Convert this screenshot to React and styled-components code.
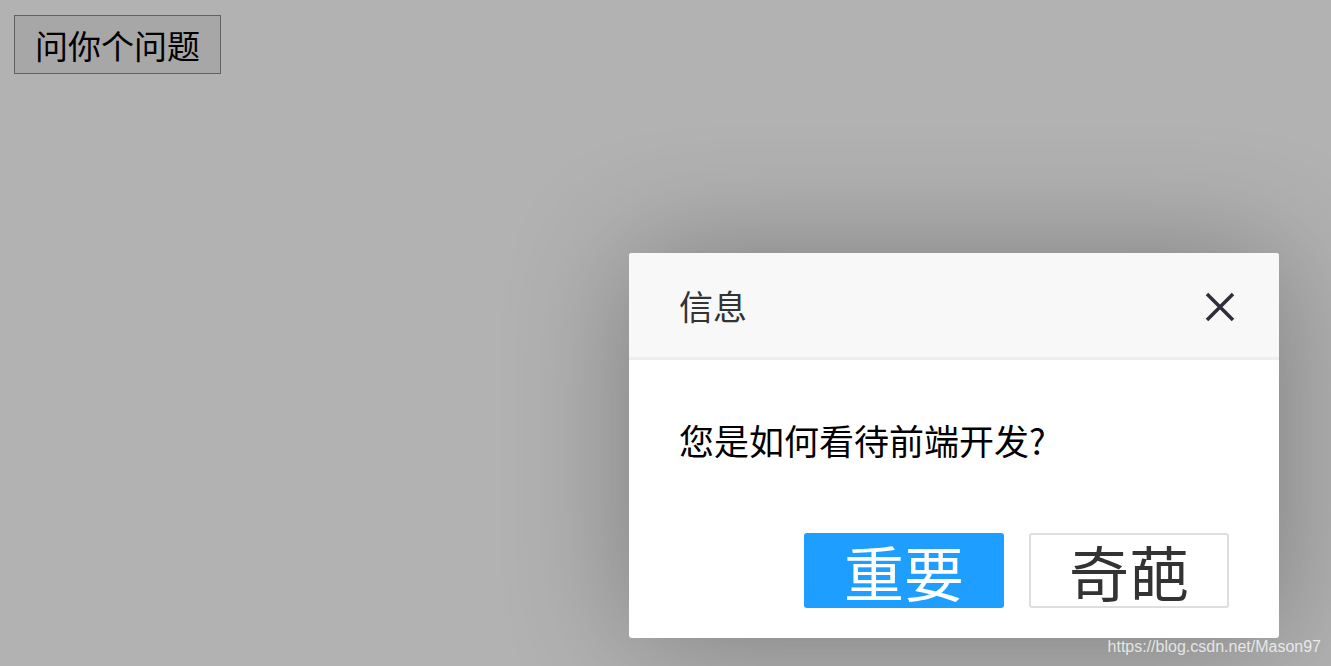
import React from 'react';
import styled, { createGlobalStyle } from 'styled-components';

const cjk = '"Microsoft YaHei", "Noto Sans CJK SC", "Liberation Sans", sans-serif';

const GlobalStyle = createGlobalStyle`
  html, body {
    margin: 0;
    padding: 0;
    background: #fff;
    font-family: ${cjk};
  }
`;

const Page = styled.div`
  position: relative;
  width: 1331px;
  height: 666px;
  overflow: hidden;
  padding: 15px 14px;
  box-sizing: border-box;
`;

const AskButton = styled.button`
  display: block;
  width: 207px;
  height: 59px;
  padding: 0;
  font-family: ${cjk};
  font-size: 33px;
  color: #000;
  background: #efefef;
  border: 1px solid #8c8c8c;
  border-radius: 0;
`;

// layer shade over the whole page
const Shade = styled.div`
  position: absolute;
  inset: 0;
  background: rgba(0, 0, 0, 0.3);
`;

const Dialog = styled.div`
  position: absolute;
  left: 629px;
  top: 253px;
  width: 650px;
  display: flex;
  flex-direction: column;
  background: #fff;
  border-radius: 3px;
  box-shadow: 2px 2px 125px rgba(0, 0, 0, 0.3);
  overflow: hidden;
`;

const Header = styled.div`
  display: flex;
  align-items: center;
  justify-content: space-between;
  height: 104px;
  padding: 0 43px 0 50px;
  background: #f8f8f8;
  border-bottom: 3px solid #eee;
  font-size: 34px;
  color: #333;
`;

const CloseButton = styled.span`
  display: flex;
  width: 32px;
  height: 32px;
  margin-top: 3px;
  align-items: center;
  justify-content: center;
  cursor: pointer;
`;

const Content = styled.div`
  padding: 50px;
  font-size: 35px;
  line-height: 60px;
  color: #000;
`;

const Actions = styled.div`
  display: flex;
  justify-content: flex-end;
  gap: 25px;
  padding: 13px 50px 30px;
`;

const ActionButton = styled.button`
  width: 200px;
  height: 75px;
  padding: 0;
  box-sizing: border-box;
  font-family: ${cjk};
  font-size: 60px;
  line-height: 1;
  border-radius: 3px;
  border: 2px solid ${(p) => (p.$primary ? '#1e9fff' : '#dedede')};
  background: ${(p) => (p.$primary ? '#1e9fff' : '#fff')};
  color: ${(p) => (p.$primary ? '#fff' : '#333')};
`;

const Watermark = styled.div`
  position: absolute;
  right: 10px;
  bottom: 10px;
  font-family: "Liberation Sans", Arial, sans-serif;
  font-size: 16px;
  color: rgba(255, 255, 255, 0.75);
`;

const App = () => (
  <>
    <GlobalStyle />
    <Page>
      <AskButton type="button">问你个问题</AskButton>
      <Shade />
      <Dialog>
        <Header>
          <span>信息</span>
          <CloseButton>
            <svg width="30" height="30" viewBox="0 0 30 30">
              <path
                d="M2 2 L28 28 M28 2 L2 28"
                stroke="#2e2d3c"
                strokeWidth="3.5"
                fill="none"
              />
            </svg>
          </CloseButton>
        </Header>
        <Content>您是如何看待前端开发?</Content>
        <Actions>
          <ActionButton type="button" $primary>
            重要
          </ActionButton>
          <ActionButton type="button">奇葩</ActionButton>
        </Actions>
      </Dialog>
      <Watermark>https://blog.csdn.net/Mason97</Watermark>
    </Page>
  </>
);

export default App;
